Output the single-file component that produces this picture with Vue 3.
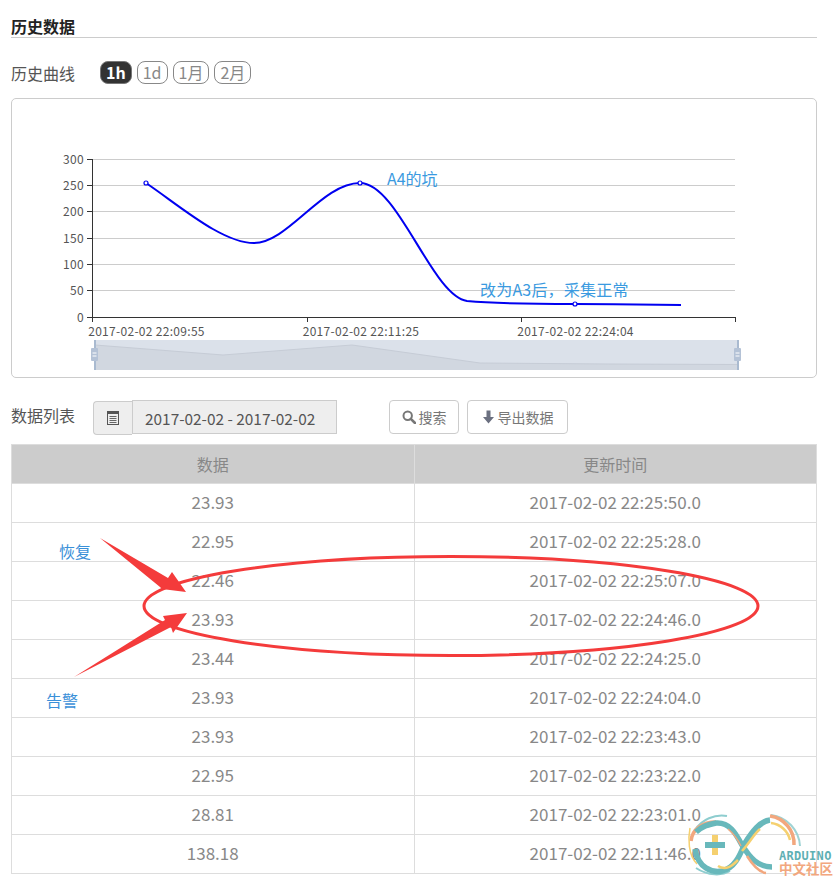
<template>
  <div class="page">
    <div class="title">历史数据</div>

    <div class="curve-head">
      <span class="label">历史曲线</span>
      <div class="ranges">
        <span v-for="r in ranges" :key="r" class="range" :class="{ active: r === '1h' }">{{ r }}</span>
      </div>
    </div>

    <div class="chart-box">
      <svg class="chart" viewBox="12 99 804 278" width="804" height="278">
        <g v-for="t in yTicks" :key="t.label">
          <line v-if="t.label !== '0'" x1="92" :y1="t.y" x2="735" :y2="t.y" stroke="#ccc" />
          <line x1="87" :y1="t.y" x2="92" :y2="t.y" stroke="#333" />
          <text x="84" :y="t.y + 4" text-anchor="end" class="axis-text">{{ t.label }}</text>
        </g>
        <line x1="92.5" y1="159" x2="92.5" y2="317" stroke="#333" />
        <line x1="92" y1="317.5" x2="736" y2="317.5" stroke="#333" />
        <line v-for="x in xTicks" :key="x" :x1="x + 0.5" y1="317" :x2="x + 0.5" y2="322" stroke="#333" />
        <text x="146.500" y="336" text-anchor="middle" class="axis-text">2017-02-02 22:09:55</text>
        <text x="361" y="336" text-anchor="middle" class="axis-text">2017-02-02 22:11:25</text>
        <text x="575.500" y="336" text-anchor="middle" class="axis-text">2017-02-02 22:24:04</text>

        <path
          d="M146 183 C180 206 222 243 254 243 C288 243 322 183 360 183 C398 183 432 296 467 301 C500 304 540 304 575 304 C610 304 650 305 681 305"
          fill="none" stroke="#0000f0" stroke-width="2"
        />
        <circle cx="146" cy="183" r="2" fill="#fff" stroke="#0000f0" stroke-width="1.2" />
        <circle cx="360" cy="183" r="2" fill="#fff" stroke="#0000f0" stroke-width="1.2" />
        <circle cx="575" cy="304" r="2" fill="#fff" stroke="#0000f0" stroke-width="1.2" />

        <text x="387" y="185" class="note-text">A4的坑</text>
        <text x="480" y="296" class="note-text note-wide">改为A3后，采集正常</text>

        <rect x="95" y="340" width="643" height="30" fill="#dbe1ea" />
        <polygon points="95,345 223,355 352,345 480,363 609,364 738,364.5 738,370 95,370" fill="#d1d7e0" stroke="none" />
        <polyline points="95,345 223,355 352,345 480,363 609,364 738,364.5" fill="none" stroke="#c6ccd6" />
        <rect x="94" y="340" width="2" height="30" fill="#a9bad0" />
        <rect x="737" y="340" width="2" height="30" fill="#a9bad0" />
        <g v-for="x in [91, 734]" :key="x">
          <rect :x="x" y="348" width="7" height="13" rx="1" fill="#b4c2d6" />
          <line :x1="x + 1.5" y1="353" :x2="x + 5.5" y2="353" stroke="#fff" />
          <line :x1="x + 1.5" y1="356" :x2="x + 5.5" y2="356" stroke="#fff" />
        </g>
      </svg>
    </div>

    <div class="list-head">
      <span class="label list-label">数据列表</span>
      <div class="date-group">
        <span class="date-addon">
          <svg width="14" height="14" viewBox="0 0 14 14">
            <rect x="1.5" y="0.5" width="11" height="13" fill="none" stroke="#555" />
            <rect x="1.5" y="0.5" width="11" height="2.5" fill="#555" />
            <path d="M3.5 5.5h7M3.5 7.5h7M3.5 9.5h7M3.5 11.5h7" stroke="#666" fill="none" />
          </svg>
        </span>
        <span class="date-input">2017-02-02 - 2017-02-02</span>
      </div>
      <button class="btn search-btn">
        <svg width="14" height="14" viewBox="0 0 14 14">
          <circle cx="5.7" cy="5.7" r="4.2" fill="none" stroke="#777" stroke-width="2" />
          <line x1="8.8" y1="8.8" x2="13" y2="13" stroke="#777" stroke-width="2.6" stroke-linecap="round" />
        </svg>
        搜索
      </button>
      <button class="btn">
        <svg width="13" height="14" viewBox="0 0 13 14">
          <path d="M4.5 0.5h4v6.5h3.5l-5.5 6.5-5.5-6.5h3.500z" fill="#6b7080" />
        </svg>
        导出数据
      </button>
    </div>

    <table class="data-table">
      <thead>
        <tr><th>数据</th><th>更新时间</th></tr>
      </thead>
      <tbody>
        <tr v-for="row in rows" :key="row.time">
          <td>{{ row.value }}</td>
          <td>{{ row.time }}</td>
        </tr>
      </tbody>
    </table>

    <!-- hand drawn marks on top of the screenshot -->
    <svg class="marks" width="837" height="880" viewBox="0 0 837 880">
      <ellipse cx="451" cy="606" rx="307" ry="49.500" fill="none" stroke="#f43b3b" stroke-width="3" />
      <polygon points="100,538 168,578 172,572 186,592 162,589 160,587" fill="#f43b3b" />
      <polygon points="74,677 165,620 163,616 187,613 173,633 171,627" fill="#f43b3b" />

      <g class="logo">
        <path d="M695 830A32 32 0 0 1 727 816" fill="none" stroke="#8ecdcf" stroke-width="2" />
        <path d="M696 868C708 876 722 876 730 871" fill="none" stroke="#8ecdcf" stroke-width="2" />
        <path d="M771 815A33 33 0 0 1 800 846" fill="none" stroke="#9fd3d4" stroke-width="2" />
        <path d="M691 841C692 829 703 822 716 822" fill="none" stroke="#f2a77e" stroke-width="3.500" />
        <path d="M770 816A28 28 0 0 1 794 845" fill="none" stroke="#f2a77e" stroke-width="3.500" />
        <path d="M771 823A22 22 0 0 1 790 840" fill="none" stroke="#f5d06f" stroke-width="2.500" />
        <path d="M690 828C688 838 688 855 697 864" fill="none" stroke="#f5d06f" stroke-width="1.500" />
        <path d="M696 832C702 826 708 825 716 823C730 822 736 834 742 845C750 858 758 867 772 867" fill="none" stroke="#68b8bb" stroke-width="5.500" />
        <path d="M695 849C698 868 712 873 722 871C735 868 740 855 745 843C752 832 760 821 770 820" fill="none" stroke="#68b8bb" stroke-width="5.500" />
        <path d="M718 866C726 871 732 866 738 860" fill="none" stroke="#f5d06f" stroke-width="2.500" />
        <path d="M742 851C750 842 754 834 760 829" fill="none" stroke="#f5d06f" stroke-width="2.500" />
        <path d="M728 829C734 834 738 840 741 846" fill="none" stroke="#f2a77e" stroke-width="1.500" />
        <path d="M747 856C752 864 758 872 766 873" fill="none" stroke="#f2a77e" stroke-width="2.500" />
        <rect x="712" y="835" width="6" height="20" fill="#f5d06f" />
        <rect x="705" y="842" width="20" height="6" fill="#68b8bb" />
      </g>
    </svg>

    <span class="mark-text mark-a">恢复</span>
    <span class="mark-text mark-b">告警</span>
    <div class="logo-text">
      <div class="logo-en">ARDUINO</div>
      <div class="logo-cn">中文社区</div>
    </div>
  </div>
</template>

<script setup>
const ranges = ['1h', '1d', '1月', '2月']

const yTicks = [
  { label: '300', y: 159.5 },
  { label: '250', y: 185.5 },
  { label: '200', y: 211.5 },
  { label: '150', y: 238.5 },
  { label: '100', y: 264.5 },
  { label: '50', y: 290.5 },
  { label: '0', y: 317.5 },
]
const xTicks = [92, 307, 521, 735]

const rows = [
  { value: '23.93', time: '2017-02-02 22:25:50.0' },
  { value: '22.95', time: '2017-02-02 22:25:28.0' },
  { value: '22.46', time: '2017-02-02 22:25:07.0' },
  { value: '23.93', time: '2017-02-02 22:24:46.0' },
  { value: '23.44', time: '2017-02-02 22:24:25.0' },
  { value: '23.93', time: '2017-02-02 22:24:04.0' },
  { value: '23.93', time: '2017-02-02 22:23:43.0' },
  { value: '22.95', time: '2017-02-02 22:23:22.0' },
  { value: '28.81', time: '2017-02-02 22:23:01.0' },
  { value: '138.18', time: '2017-02-02 22:11:46.0' },
]
</script>

<style>
body {
  background: #fff;
}
</style>

<style scoped>
.page {
  position: relative;
  width: 837px;
  height: 880px;
  padding: 16px 20px 0 11px;
  box-sizing: border-box;
  overflow: hidden;
  font-family: "Noto Sans CJK SC", "Noto Sans", sans-serif;
  color: #555;
}

.title {
  height: 21px;
  font-size: 16px;
  line-height: 20px;
  font-weight: 700;
  color: #222;
  border-bottom: 1px solid #ccc;
}

.curve-head {
  display: flex;
  align-items: flex-start;
  margin-top: 23px;
  height: 24px;
}

.label {
  font-size: 16px;
  line-height: 24px;
  color: #555;
}

.ranges {
  display: flex;
  gap: 5px;
  margin-left: 25px;
}

.range {
  height: 23px;
  line-height: 21px;
  box-sizing: border-box;
  padding: 0 5px;
  font-size: 16px;
  color: #888;
  border: 1px solid #888;
  border-radius: 8px;
}

.range.active {
  background: #333;
  border-color: #777;
  color: #fff;
  font-weight: 700;
}

.chart-box {
  margin-top: 13px;
  height: 278px;
  border: 1px solid #ccc;
  border-radius: 5px;
}

.chart {
  display: block;
}

.axis-text {
  font-size: 12px;
  letter-spacing: 0.3px;
  fill: #555;
}

.note-text {
  font-size: 16px;
  fill: #3a9ae0;
}

.note-wide {
  letter-spacing: 0.2px;
}

.list-head {
  display: flex;
  align-items: flex-start;
  margin-top: 22px;
  height: 35px;
}

.list-label {
  width: 82px;
  line-height: 24px;
  margin-top: 3px;
}

.date-group {
  display: flex;
  width: 244px;
}

.date-addon {
  display: flex;
  align-items: center;
  justify-content: center;
  width: 39px;
  height: 34px;
  margin-top: 1px;
  box-sizing: border-box;
  background: #eee;
  border: 1px solid #ccc;
  border-right: 0;
  border-radius: 4px 0 0 4px;
}

.date-input {
  flex: 1;
  height: 34px;
  line-height: 34px;
  box-sizing: border-box;
  padding-left: 12px;
  background: #eee;
  border: 1px solid #ccc;
  font-size: 15.4px;
  color: #555;
}

.btn {
  display: flex;
  align-items: center;
  justify-content: center;
  gap: 3px;
  height: 34px;
  width: 101px;
  margin-left: 8px;
  padding: 0;
  background: #fff;
  border: 1px solid #ccc;
  border-radius: 4px;
  font-family: inherit;
  font-size: 14px;
  color: #777;
}

.search-btn {
  width: 70px;
  margin-left: 52px;
}

.data-table {
  width: 806px;
  margin-top: 9px;
  border-collapse: collapse;
  table-layout: fixed;
  font-size: 17px;
}

.data-table th,
.data-table td {
  height: 39px;
  padding: 0;
  box-sizing: border-box;
  border: 1px solid #ddd;
  text-align: center;
  font-weight: 400;
  color: #888;
}

.data-table td {
  padding-bottom: 3px;
}

.data-table th {
  background: #ccc;
  font-size: 16px;
  color: #888;
}

.marks {
  position: absolute;
  left: 0;
  top: 0;
  pointer-events: none;
}

.mark-text {
  position: absolute;
  font-size: 16px;
  line-height: 20px;
  color: #3a90d8;
}

.mark-a {
  left: 59px;
  top: 541px;
}

.mark-b {
  left: 46px;
  top: 690px;
}

.logo-text {
  position: absolute;
  left: 779px;
  top: 851px;
  width: 54px;
}

.logo-en {
  font-family: "DejaVu Sans Mono", monospace;
  font-size: 12px;
  line-height: 11px;
  font-weight: 700;
  color: #5fb0b4;
  letter-spacing: 0.3px;
  white-space: nowrap;
}

.logo-cn {
  font-size: 13.5px;
  line-height: 13px;
  font-weight: 700;
  color: #f2a77e;
  white-space: nowrap;
}
</style>
